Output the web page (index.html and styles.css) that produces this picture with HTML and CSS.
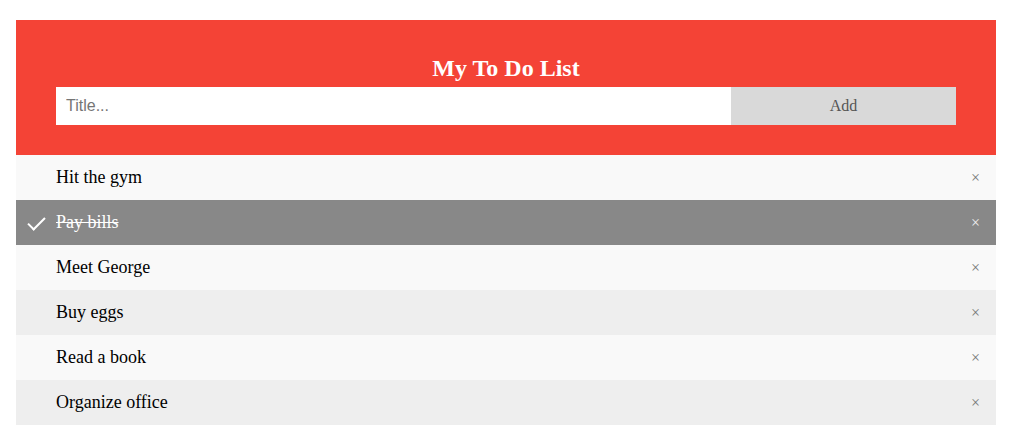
FILE: index.html
```html
<!DOCTYPE html>
<html>
<head>
<meta charset="utf-8">
<title>My To Do List</title>
<link rel="stylesheet" href="styles.css">
</head>
<body>
<div class="app">
  <div class="header">
    <h2 class="title">My To Do List</h2>
    <div class="add-row">
      <input class="title-input" type="text" placeholder="Title...">
      <span class="add-btn">Add</span>
    </div>
  </div>
  <ul class="list">
    <li class="item"><span class="text">Hit the gym</span><span class="close">×</span></li>
    <li class="item checked"><span class="text">Pay bills</span><span class="close">×</span></li>
    <li class="item"><span class="text">Meet George</span><span class="close">×</span></li>
    <li class="item"><span class="text">Buy eggs</span><span class="close">×</span></li>
    <li class="item"><span class="text">Read a book</span><span class="close">×</span></li>
    <li class="item"><span class="text">Organize office</span><span class="close">×</span></li>
  </ul>
</div>
</body>
</html>
```
FILE: styles.css
```css
* { box-sizing: border-box; }
body {
  margin: 0;
  font-family: "Liberation Serif", "Times New Roman", serif;
  background: #fff;
}
.app {
  width: 980px;
  margin: 20px 0 0 16px;
}
.header {
  background: #f44336;
  padding: 30px 40px;
  color: #fff;
  text-align: center;
}
.title {
  margin: 5px;
  font-size: 24px;
  font-weight: bold;
  line-height: 27px;
}
.add-row {
  display: flex;
}
.title-input {
  margin: 0;
  border: none;
  border-radius: 0;
  width: 75%;
  height: 38px;
  padding: 10px;
  font-size: 16px;
  font-family: "Liberation Sans", Arial, sans-serif;
  outline: none;
}
.title-input::placeholder { color: #757575; }
.add-btn {
  width: 25%;
  height: 38px;
  padding: 10px;
  background: #d9d9d9;
  color: #555;
  text-align: center;
  font-size: 16px;
  line-height: 18px;
}
.list {
  margin: 0;
  padding: 0;
  list-style: none;
}
.item {
  position: relative;
  display: flex;
  justify-content: space-between;
  align-items: center;
  height: 45px;
  padding: 0 16px 0 40px;
  background: #eee;
  font-size: 18px;
  color: #000;
}
.item:nth-child(odd) { background: #f9f9f9; }
.item.checked {
  background: #888;
  color: #fff;
}
.item.checked .text { text-decoration: line-through; }
.item.checked::before {
  content: "";
  position: absolute;
  border-color: #fff;
  border-style: solid;
  border-width: 0 2px 2px 0;
  top: 13px;
  left: 16px;
  transform: rotate(45deg);
  height: 15px;
  width: 7px;
}
.close {
  color: #777;
  font-size: 16px;
}
.item.checked .close { color: #eee; }
```
